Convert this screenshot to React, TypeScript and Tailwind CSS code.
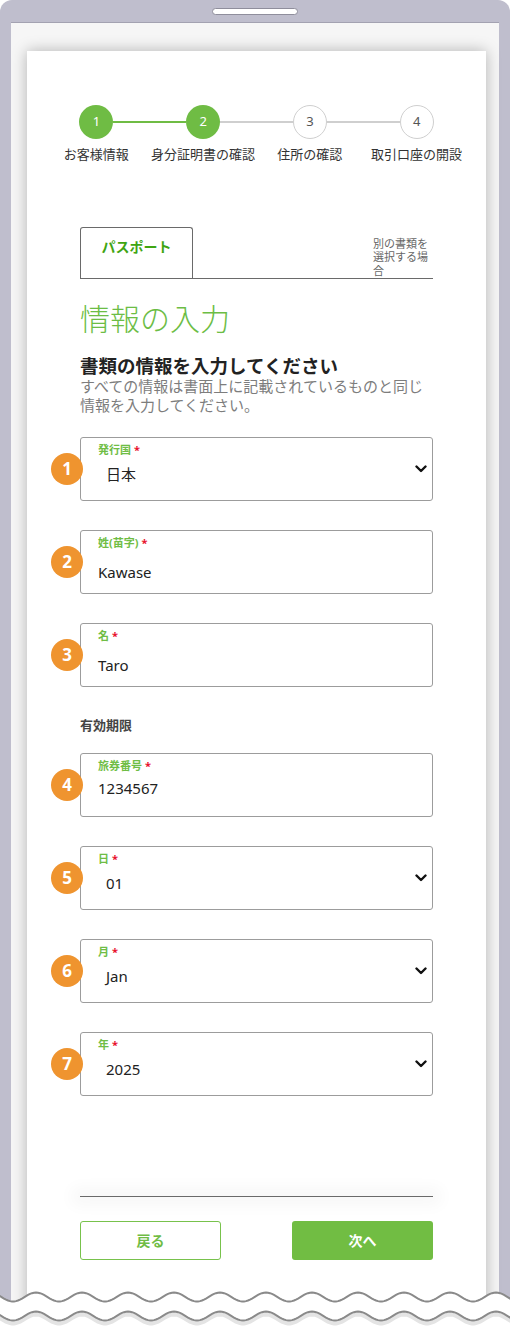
import React from 'react'

const steps = ['お客様情報', '身分証明書の確認', '住所の確認', '取引口座の開設']

type Field = { n: number; label: string; value: string; select?: boolean; valueClass: string }

const topFields: Field[] = [
  { n: 1, label: '発行国', value: '日本', select: true, valueClass: 'mt-[7px] ml-[8px]' },
  { n: 2, label: '姓(苗字)', value: 'Kawase', valueClass: 'mt-[12px]' },
  { n: 3, label: '名', value: 'Taro', valueClass: 'mt-[12px]' },
]

const expiryFields: Field[] = [
  { n: 4, label: '旅券番号', value: '1234567', valueClass: 'mt-[5px]' },
  { n: 5, label: '日', value: '01', select: true, valueClass: 'mt-[7px] ml-[8px]' },
  { n: 6, label: '月', value: 'Jan', select: true, valueClass: 'mt-[7px] ml-[8px]' },
  { n: 7, label: '年', value: '2025', select: true, valueClass: 'mt-[7px] ml-[8px]' },
]

const wavePath = (cy: number, amp: number) => {
  const pts: string[] = []
  for (let x = -4; x <= 514; x += 2) {
    const y = cy - amp * Math.cos(((x - 36) / 46) * Math.PI * 2)
    pts.push(`${x},${y.toFixed(2)}`)
  }
  return pts
}

const Chevron = () => (
  <svg width="12" height="8" viewBox="0 0 12 8" className="shrink-0">
    <polyline points="1.5,1.5 6,6 10.5,1.5" fill="none" stroke="#111" strokeWidth="2.4" strokeLinecap="round" strokeLinejoin="round" />
  </svg>
)

const FormField = ({ f }: { f: Field }) => (
  <div className="relative flex items-center h-[64px] border-[1.5px] border-[#9c9c9c] rounded-[3px] bg-white pl-[17px] pr-[5px]">
    <div className="absolute left-[-30px] top-1/2 -translate-y-1/2 w-8 h-8 rounded-full bg-[#ef942f] text-white flex items-center justify-center font-['Open_Sans',sans-serif] font-bold text-[17px]">
      {f.n}
    </div>
    <div className="flex-1 self-start pt-[5px]">
      <div className="flex items-center text-[11px] leading-[14px] font-bold text-[#6fbd45]">
        {f.label}
        <span className="ml-[3px] text-[#e8112d]">*</span>
      </div>
      <div className={`${f.valueClass} text-[15px] leading-[20px] text-[#222]`}>{f.value}</div>
    </div>
    {f.select && <Chevron />}
  </div>
)

export default function App() {
  const upper = wavePath(12, 4.5)
  const lower = wavePath(31, 4.5)
  return (
    <div className="relative w-[510px] h-[1327px] overflow-hidden bg-white font-['Noto_Sans','Noto_Sans_CJK_JP',sans-serif]">
      <div className="bg-[#bfbecd] rounded-t-[12px] pt-[22px] px-[11px] h-[1327px]">
        <div className="relative h-full bg-[#f6f6f6] border-t border-[#a3a2b1] pt-[28px] pl-[16px] pr-[13px]">
          <div className="absolute left-1/2 -translate-x-1/2 top-[-15px] w-[86px] h-[7px] rounded-full bg-white border border-[#8f8e9c]" />
          <div className="bg-white shadow-[0_0_14px_rgba(0,0,0,0.28)] pt-[54px] pb-[200px]">
            {/* stepper */}
            <div className="grid grid-cols-4 px-4">
              {steps.map((s, i) => (
                <div key={s} className="flex flex-col items-center">
                  <div className="flex items-center w-full">
                    <div className={i === 0 ? 'flex-1 h-[2px]' : i === 1 ? 'flex-1 h-[2px] bg-[#6fbc44]' : 'flex-1 h-[2px] bg-[#cfcfcf]'} />
                    {i < 2 ? (
                      <div className="w-[34px] h-[34px] rounded-full bg-[#6fbc44] text-white flex items-center justify-center text-[13px]">{i + 1}</div>
                    ) : (
                      <div className="w-[34px] h-[34px] rounded-full bg-white border-[1.5px] border-[#cfcfcf] text-[#555] flex items-center justify-center text-[13px]">{i + 1}</div>
                    )}
                    <div className={i === 3 ? 'flex-1 h-[2px]' : i === 0 ? 'flex-1 h-[2px] bg-[#6fbc44]' : 'flex-1 h-[2px] bg-[#cfcfcf]'} />
                  </div>
                  <div className="mt-[7px] text-[13px] leading-[17px] text-[#333] whitespace-nowrap">{s}</div>
                </div>
              ))}
            </div>

            <div className="px-[53px]">
              {/* document tabs */}
              <div className="mt-[64px] flex items-end border-b border-[#6a6a6a]">
                <div className="w-[113px] h-[51px] border border-b-0 border-[#6a6a6a] rounded-t-[3px] pt-[9px] text-center text-[14px] leading-[20px] font-bold text-[#3fa512]">
                  パスポート
                </div>
                <div className="ml-auto w-[60px] pb-[1px] text-[11px] leading-[13.5px] text-[#666]">別の書類を選択する場合</div>
              </div>

              <h1 className="mt-[20px] text-[30px] leading-[40px] font-light text-[#6cbd45]">情報の入力</h1>
              <h2 className="mt-[16px] text-[18.5px] leading-[22px] font-bold text-[#222]">書類の情報を入力してください</h2>
              <p className="text-[15px] leading-[19px] text-[#7d7d7d]">
                すべての情報は書面上に記載されているものと同じ情報を入力してください。
              </p>

              <div className="mt-[22px] flex flex-col gap-[29px]">
                {topFields.map(f => (
                  <FormField key={f.n} f={f} />
                ))}
              </div>

              <div className="mt-[29px] text-[13px] leading-[18px] font-bold text-[#444]">有効期限</div>

              <div className="mt-[19px] flex flex-col gap-[29px]">
                {expiryFields.map(f => (
                  <FormField key={f.n} f={f} />
                ))}
              </div>

              <div className="mt-[100px] h-px bg-[#6a6a6a] shadow-[0_0_16px_8px_rgba(0,0,0,0.035)]" />

              <div className="mt-[24px] flex justify-between">
                <button className="w-[141px] h-[39px] border-[1.5px] border-[#78c24c] rounded-[3px] bg-white text-[14px] font-bold text-[#6fbc44]">戻る</button>
                <button className="w-[141px] h-[39px] rounded-[3px] bg-[#71bd43] text-[14px] font-bold text-white">次へ</button>
              </div>
            </div>
          </div>
        </div>
      </div>

      {/* torn bottom edge */}
      <svg className="absolute left-0 bottom-0" width="510" height="42" viewBox="0 0 510 42">
        <polygon points={[...upper, '514,42', '-4,42'].join(' ')} fill="#fff" />
        <polyline points={lower.map(p => { const [x, y] = p.split(','); return `${x},${(parseFloat(y) + 3).toFixed(2)}` }).join(' ')} fill="none" stroke="#e4e4e4" strokeWidth="4" />
        <polyline points={upper.join(' ')} fill="none" stroke="#8a8a8a" strokeWidth="2" />
        <polyline points={lower.join(' ')} fill="none" stroke="#8a8a8a" strokeWidth="2" />
      </svg>
    </div>
  )
}
